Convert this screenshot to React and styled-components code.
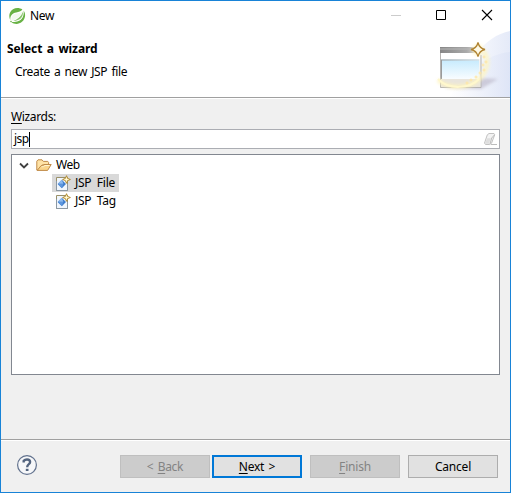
import React from "react";
import styled, { createGlobalStyle, css } from "styled-components";

const GlobalStyle = createGlobalStyle`
  * { box-sizing: border-box; }
  body { margin: 0; overflow: hidden; }
`;

const Dialog = styled.div`
  width: 511px;
  height: 493px;
  border: 1px solid #1883d7;
  background: #f0f0f0;
  display: flex;
  flex-direction: column;
  font: 12px/18px "Noto Sans", "Open Sans", sans-serif;
  color: #000;
`;

const Header = styled.header`
  position: relative;
  height: 97px;
  background: #fff;
  border-bottom: 1px solid #a0a0a0;
  flex: none;
`;

const TitleBar = styled.div`
  position: relative;
  z-index: 1;
  display: flex;
  height: 30px;
  padding-left: 8px;
  align-items: center;
`;

const Text = styled.span`
  letter-spacing: ${(p) => p.$track || 0}px;
  word-spacing: 2.6px;
  white-space: pre;
`;

const WindowTitle = styled(Text)`
  flex: 1;
  margin-left: 4px;
`;

const Heading = styled.h1`
  position: relative;
  margin: 9px 0 0 6px;
  font-size: 12px;
  line-height: 18px;
  letter-spacing: -0.1px;
  word-spacing: 1.5px;
`;

const Description = styled.p`
  position: relative;
  margin: 5px 0 0 14px;
  letter-spacing: -0.34px;
  word-spacing: 1.4px;
`;

const Controls = styled.svg`
  width: 120px;
  height: 30px;
  flex: none;
`;

const Banner = styled.svg`
  position: absolute;
  right: 0;
  bottom: 0;
  width: 90px;
  height: 72px;
`;

const Body = styled.main`
  flex: 1;
  border-top: 1px solid #fff;
  padding: 9px 10px 0;
`;

const FieldLabel = styled.label`
  display: block;
  height: 21px;
  letter-spacing: -0.35px;
`;

const Filter = styled.div`
  display: flex;
  align-items: center;
  height: 20px;
  padding: 0 1px 0 2px;
  border: 1px solid #abadb3;
  background: #fff;
`;

const Caret = styled.i`
  width: 1px;
  height: 15px;
  background: #000;
  margin-right: auto;
`;

const Tree = styled.div`
  margin-top: 5px;
  height: 221px;
  border: 1px solid #828790;
  background: #fff;
  padding-top: 1px;
`;

const Row = styled.div`
  display: flex;
  align-items: center;
  height: 18px;
  padding-left: ${(p) => (p.$child ? 40 : 5)}px;
`;

const Item = styled.div`
  display: flex;
  align-items: center;
  height: 18px;
  padding: 0 4px 0 3px;
  gap: 4px;
  background: ${(p) => (p.$selected ? "#d9d9d9" : "transparent")};
`;

const Icon = styled.svg`
  display: block;
  flex: none;
`;

const Footer = styled.footer`
  height: 53px;
  border-top: 1px solid #a0a0a0;
  box-shadow: inset 0 1px #fff;
  padding: 15px 12px 0 15px;
  display: flex;
  align-items: flex-start;
`;

const Buttons = styled.div`
  display: flex;
  margin-left: auto;
  gap: 8px;
`;

const Pair = styled.div`
  display: flex;
  gap: 2px;
`;

const Button = styled.button`
  width: 90px;
  height: 23px;
  padding: 0;
  border: 1px solid #adadad;
  background: #e1e1e1;
  color: #000;
  font: inherit;
  line-height: 21px;
  letter-spacing: ${(p) => p.$track || 0}px;
  word-spacing: 1.5px;
  ${(p) => p.$primary && css`
    border: 2px solid #0078d7;
    line-height: 19px;
  `}
  &:disabled {
    background: #ccc;
    border-color: #bfbfbf;
    color: #838383;
  }
`;

const Mnemonic = styled.u`
  text-underline-offset: 2px;
  text-decoration-thickness: 1px;
  text-decoration-skip-ink: none;
`;

function SpringLogo() {
  return (
    <Icon width="17" height="17" viewBox="0 0 17 17">
      <path d="M1.3 12.2C-.7 8.2.3 3.6 4 1.3C7-.5 10.8-.1 13.4 1.6C12 3.5 9.8 4 7.2 4.5C3.2 5.3.9 8 1.3 12.2Z" fill="#68b245" />
      <path d="M14.6 2.4C17.2 6.2 16.3 11 13 13.8C9.8 16.5 5.5 16.5 2.3 14.2C6.5 14.2 10.5 13.6 12.7 10.8C14.6 8.4 15 5.3 14.6 2.4Z" fill="#68b245" />
      <path d="M14 3.5C14.3 9 11.6 12.5 4.2 13.1C8.8 11.2 12 8.8 14 3.5Z" fill="#8bc46f" />
      <path d="M2.8 12.6C1.6 8.7 3.8 6.2 7.7 5.6C10.7 5.1 12.5 4.6 13.7 3C12.4 7.5 8.3 11 2.8 12.6Z" fill="#f2f9ef" />
      <circle cx="2" cy="13.5" r=".8" fill="#68b245" />
    </Icon>
  );
}

function WindowControls() {
  return (
    <Controls viewBox="390 1 120 30" fill="none">
      <path d="M391 15.5h10" stroke="#ccc" />
      <path d="M436.5 10.5h9v9h-9z" stroke="#000" />
      <path d="M482 10l10 10M492 10l-10 10" stroke="#000" strokeWidth="1.1" />
    </Controls>
  );
}

const SPARKLE = "M478 42.5Q479.3 48.2 485 49.5Q479.3 50.8 478 56.5Q476.7 50.8 471 49.5Q476.7 48.2 478 42.5Z";
const STARS = [[484, 57], [486, 62], [483, 65], [484, 70], [480, 73], [476, 77], [471, 80], [467, 83]];

function WizardBanner() {
  return (
    <Banner viewBox="420 25 90 72">
      <defs>
        <linearGradient id="arc" x1="0" x2="1">
          <stop stopColor="#fff" />
          <stop offset="1" stopColor="#dce3f6" />
        </linearGradient>
        <linearGradient id="sky" x2="0" y2="1">
          <stop stopColor="#c5eafd" />
          <stop offset="1" stopColor="#fafdff" />
        </linearGradient>
        <linearGradient id="bar">
          <stop stopColor="#868686" />
          <stop offset=".65" stopColor="#aaa" />
          <stop offset="1" stopColor="#e5e3df" />
        </linearGradient>
        <linearGradient id="edge">
          <stop stopColor="#999" />
          <stop offset="1" stopColor="#ddd" />
        </linearGradient>
        <filter id="soft" x="-30%" y="-30%" width="160%" height="160%">
          <feGaussianBlur stdDeviation="1.4" />
        </filter>
      </defs>
      <path d="M459 97C465 63 484 36 510 31V97Z" fill="url(#arc)" opacity=".75" />
      <path d="M449 97C467 72 486 54 510 52V97Z" fill="url(#arc)" opacity=".75" />
      <path d="M444 88L481 89L498 79L480 78Z" fill="#b7b2c5" opacity=".6" filter="url(#soft)" />
      <path d="M440 47h41v41h-41z" fill="#f4f4f3" />
      <path d="M440.5 53V87.5H481V55" fill="none" stroke="#b5b3b1" />
      <path d="M440 47h41v6h-41z" fill="url(#bar)" />
      <path d="M440 49h34" stroke="#b7b7b7" />
      <path d="M441 53h39v6h-39z" fill="#fff" />
      <path d="M441 59.5h38v20h-38z" fill="url(#sky)" />
      <path d="M441 60h38M441.5 60v19" stroke="url(#edge)" fill="none" />
      <path d="M441 79h39v8h-39z" fill="#e9e5dc" />
      <path d="M438 80C449 91 482 90 487 65Q488 58 484 51" stroke="#fff5bd" strokeWidth="4.5" fill="none" opacity=".75" filter="url(#soft)" />
      <path d="M438 79C448 90 470 89 479 79" stroke="#fff8cd" strokeWidth="2" fill="none" />
      <circle cx="478" cy="50" r="6" fill="#fff4bb" opacity=".65" filter="url(#soft)" />
      {STARS.map(([x, y]) => (
        <path key={`${x}-${y}`} d={`M${x - 1.5} ${y}h3M${x} ${y - 1.5}v3`} stroke="#ffe6a3" strokeWidth="1" />
      ))}
      <path d={SPARKLE} fill="#fffbe7" stroke="#b08331" strokeWidth="1.3" />
    </Banner>
  );
}

function EraserIcon() {
  return (
    <Icon width="15" height="14" viewBox="483 132 15 14">
      <path d="M489 133.5h5l.7 1.3l-3.2 8.5l-1.8 1.2h-4.2l-1-1.5l2.8-8.2z" fill="#f3f3f3" stroke="#c2c2c2" />
      <path d="M487.3 138.2h3.4l-1.6 5.5h-3.6l-.5-.8z" fill="#dedede" />
      <path d="M490 144l1.7-6l2.7-3" fill="none" stroke="#bdbdbd" />
      <path d="M491 144.5h6" stroke="#bdbdbd" />
    </Icon>
  );
}

function Chevron() {
  return (
    <Icon width="16" height="16" viewBox="0 0 16 16">
      <path d="M3 6.5L7 10.5L11 6.5" fill="none" stroke="#404040" strokeWidth="1.8" />
    </Icon>
  );
}

function FolderIcon() {
  return (
    <Icon width="16" height="16" viewBox="0 0 16 16">
      <path d="M.8 13V4.2L2 2.8h4l1.3 1.6h4.5l.8 1V8H6L2 13.4Z" fill="#ffe3a6" stroke="#c08a48" />
      <path d="M1.2 13.4L4.8 9l2-.4L8 7.5h7.2l-3.6 5.9Z" fill="#fad58c" stroke="#c08a48" />
      <path d="M5.4 9.7h2L9 8.5h4.5" stroke="#fff3cd" fill="none" />
    </Icon>
  );
}

function NewFileIcon() {
  return (
    <Icon width="16" height="16" viewBox="0 0 16 16">
      <path d="M1.5 2.5h11v13h-11z" fill="#f0f6fd" stroke="#9a9068" />
      <path d="M1.5 6v9.5h11V9" fill="none" stroke="#8c98a3" />
      <path d="M6.8 4.8L11 9L6.8 13.2L2.6 9Z" fill="#3e7dcc" />
      <path d="M6.7 4.8L8.4 8.7L3.1 8.8Z" fill="#8fbcf0" />
      <path d="M3 9.3L7 13L8.2 9Z" fill="#5e97de" />
      <path d="M11.5 .7L12.6 3.4L15.4 4.5L12.6 5.6L11.5 8.3L10.4 5.6L7.6 4.5L10.4 3.4Z" fill="#fff6bd" stroke="#ac8226" strokeWidth=".9" />
      <path d="M11.5 2.5v4M9.5 4.5h4" stroke="#fff8d8" strokeWidth=".7" />
    </Icon>
  );
}

function HelpIcon() {
  return (
    <Icon width="22" height="22" viewBox="0 0 22 22">
      <circle cx="11" cy="10" r="9.4" fill="#f6f7f9" stroke="#61718d" strokeWidth="1.2" />
      <path d="M7.7 7.5V5.9Q8.9 4.5 11 4.5Q14.1 4.5 14.1 7.1Q14.1 8.3 12.6 9.4Q11.2 10.4 11.2 12.3" fill="none" stroke="#53647f" strokeWidth="2.4" />
      <path d="M9.8 13.8h2.7v2.2h-2.7z" fill="#53647f" />
    </Icon>
  );
}

export default function App() {
  return (
    <Dialog>
      <GlobalStyle />
      <Header>
        <WizardBanner />
        <TitleBar>
          <SpringLogo />
          <WindowTitle $track={-0.3}>New</WindowTitle>
          <WindowControls />
        </TitleBar>
        <Heading>Select a wizard</Heading>
        <Description>Create a new JSP file</Description>
      </Header>
      <Body>
        <FieldLabel><Mnemonic>W</Mnemonic>izards:</FieldLabel>
        <Filter>
          <Text $track={-0.5}>jsp</Text>
          <Caret />
          <EraserIcon />
        </Filter>
        <Tree>
          <Row>
            <Chevron />
            <Item>
              <FolderIcon />
              <Text $track={-0.5}>Web</Text>
            </Item>
          </Row>
          {["JSP File", "JSP Tag"].map((name, i) => (
            <Row key={name} $child>
              <Item $selected={i === 0}>
                <NewFileIcon />
                <Text $track={-0.25}>{name}</Text>
              </Item>
            </Row>
          ))}
        </Tree>
      </Body>
      <Footer>
        <HelpIcon />
        <Buttons>
          <Pair>
            <Button disabled $track={-0.3}>&lt; <Mnemonic>B</Mnemonic>ack</Button>
            <Button $primary $track={-0.25}><Mnemonic>N</Mnemonic>ext &gt;</Button>
          </Pair>
          <Button disabled $track={-0.2}><Mnemonic>F</Mnemonic>inish</Button>
          <Button $track={-0.2}>Cancel</Button>
        </Buttons>
      </Footer>
    </Dialog>
  );
}
